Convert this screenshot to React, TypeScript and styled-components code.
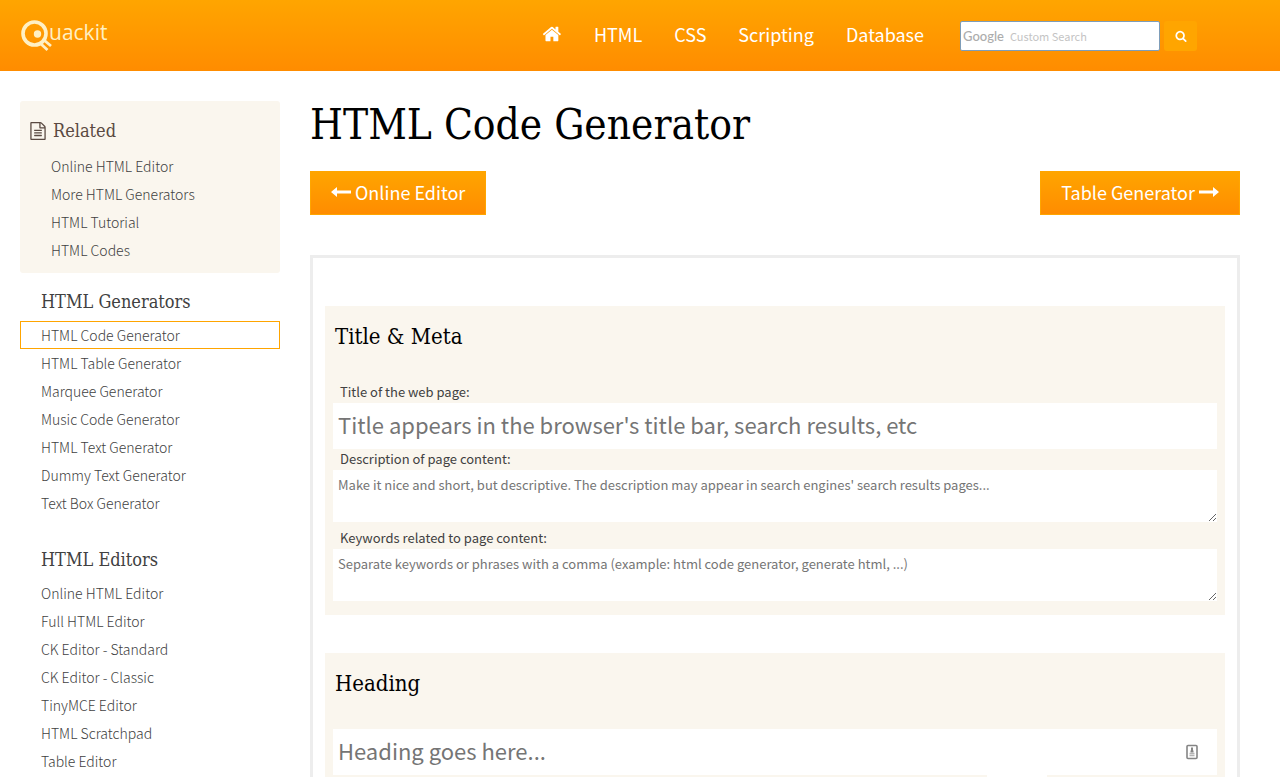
import React from "react";
import styled, { createGlobalStyle } from "styled-components";

const sans = `"Noto Sans CJK SC", "Open Sans", sans-serif`;
const slab = `"DejaVu Serif Condensed", "DejaVu Serif", serif`;

const GlobalStyle = createGlobalStyle`
  *, *::before, *::after { box-sizing: border-box; }
  body { margin: 0; background: #fff; color: #414141; font-family: ${sans}; font-size: 14px; }
  ul { list-style: none; margin: 0; padding: 0; }
  h1, h2, h3 { margin: 0; font-family: ${slab}; font-weight: 400; }
  a { color: inherit; text-decoration: none; }
  input, textarea, button, select { font-family: inherit; }
`;

const Header = styled.header`
  display: flex;
  align-items: center;
  height: 71px;
  padding: 0 83px 0 20px;
  background: linear-gradient(#ffa500, #ff8c00);
`;

const Logo = styled.a`
  display: flex;
  margin-right: auto;
  color: #fff0c4;
`;

const LogoMark = styled.svg`
  width: 33px;
  height: 32px;
`;

const LogoName = styled.span`
  margin-left: -4px;
  font-family: "Open Sans", sans-serif;
  font-size: 21px;
  line-height: 25px;
`;

const MainNav = styled.nav`
  display: flex;
  align-items: center;
  gap: 32px;
  margin-right: 36px;
  padding-bottom: 4px;
  color: #fff;
  font-size: 18px;
  line-height: 28px;
`;

const NavLink = styled.a`
  display: flex;
`;

const Icon = styled.svg<{ $size: number }>`
  width: ${(p) => p.$size}px;
  height: ${(p) => p.$size}px;
  fill: currentColor;
`;

const SearchForm = styled.form`
  display: flex;
  align-items: center;
  gap: 4px;
`;

const SearchBox = styled.label`
  display: flex;
  align-items: center;
  gap: 6px;
  width: 200px;
  height: 30px;
  padding: 0 2px;
  border: 1px solid #7e9db9;
  border-radius: 2px;
  background: #fff;
`;

const SearchBrand = styled.span`
  color: #acacac;
  font-family: Lato, sans-serif;
  font-size: 13px;
  font-weight: 500;
`;

const SearchInput = styled.input`
  flex: 1;
  min-width: 0;
  padding: 0;
  border: 0;
  outline: 0;
  background: none;
  font-size: 11px;
  &::placeholder { color: #c4c4c4; }
`;

const SearchButton = styled.button`
  display: flex;
  align-items: center;
  justify-content: center;
  width: 33px;
  height: 30px;
  padding: 0;
  border: 0;
  border-radius: 3px;
  background: #ffa500;
  color: #fff;
`;

const Page = styled.div`
  display: flex;
  gap: 30px;
  padding: 30px 40px 0 20px;
`;

const Sidebar = styled.aside`
  flex: 0 0 260px;
`;

const Related = styled.section`
  padding: 17px 0 9px;
  border-radius: 3px;
  background: #faf6ee;
`;

const RelatedHeading = styled.h3`
  display: flex;
  align-items: center;
  gap: 6px;
  margin-bottom: 8px;
  padding-left: 9px;
  font-size: 18px;
  line-height: 26px;
  color: #5a4a42;
`;

const RelatedLinks = styled.div`
  padding-left: 10px;
`;

const SideSection = styled.section`
  margin-top: 16px;
  & + & { margin-top: 30px; }
`;

const SideHeading = styled.h3`
  margin-bottom: 6px;
  padding-left: 21px;
  font-size: 18px;
  line-height: 26px;
`;

const SideLink = styled.a<{ $active?: boolean }>`
  display: block;
  padding-left: 20px;
  border: 1px solid ${(p) => (p.$active ? "#ffa500" : "transparent")};
  font-size: 14px;
  font-weight: 300;
  line-height: 26px;
`;

const Main = styled.main`
  flex: 1;
  min-width: 0;
`;

const Title = styled.h1`
  margin-bottom: 23px;
  color: #000;
  font-size: 42px;
  line-height: 47px;
`;

const Pager = styled.nav`
  display: flex;
  justify-content: space-between;
  margin-bottom: 40px;
`;

const PagerLink = styled.a`
  display: flex;
  align-items: center;
  gap: 4px;
  height: 44px;
  padding: 0 20px 2px;
  border: 1px solid #ffa500;
  background: linear-gradient(#ffa500, #ff8c00);
  color: #fff;
  font-size: 18px;
`;

const Arrow = styled.svg`
  width: 20px;
  height: 12px;
  fill: currentColor;
`;

const Generator = styled.form`
  display: flex;
  flex-direction: column;
  gap: 38px;
  padding: 48px 12px 40px;
  border: 3px solid #ededed;
`;

const Card = styled.section`
  padding: 17px 8px 14px;
  background: #faf6ee;
`;

const CardTitle = styled.h2`
  margin-bottom: 31px;
  padding-left: 2px;
  color: #000;
  font-size: 22px;
  line-height: 28px;
`;

const FieldLabel = styled.label`
  display: block;
  padding: 0 7px 2px;
  font-size: 13px;
  line-height: 19px;
`;

const BigField = styled.div`
  display: flex;
  align-items: center;
  height: 46px;
  padding-right: 19px;
  background: #fff;
  color: #777;
`;

const BigInput = styled.input`
  flex: 1;
  min-width: 0;
  height: 46px;
  padding: 0 5px 4px;
  border: 0;
  outline: 0;
  background: none;
  font-size: 22px;
  &::placeholder { color: #757575; }
`;

const TextArea = styled.textarea`
  display: block;
  width: 100%;
  height: 52px;
  padding: 5px;
  border: 0;
  outline: 0;
  background: #fff;
  font-size: 13px;
  line-height: 20px;
  resize: vertical;
  &::placeholder { color: #757575; }
  & + label { padding-top: 6px; }
`;

const LevelSelect = styled.select`
  display: block;
  width: 60px;
  height: 28px;
  margin: 0 170px 0 auto;
  border: 0;
  background: #fff;
  font-size: 13px;
`;

const HOME =
  "M1408 992v480q0 26-19 45t-45 19h-384v-384h-256v384h-384q-26 0-45-19t-19-45v-480q0-1 .5-3t.5-3l575-474 575 474q1 2 1 6zm223-69l-62 74q-8 9-21 11h-3q-13 0-21-7l-692-577-692 577q-12 8-24 7-13-2-21-11l-62-74q-8-10-7-23.5t11-21.5l719-599q32-26 76-26t76 26l244 204v-195q0-14 9-23t23-9h192q14 0 23 9t9 23v408l219 182q10 8 11 21.5t-7 23.5z";
const SEARCH =
  "M1216 832q0-185-131.5-316.5t-316.5-131.5-316.5 131.5-131.5 316.5 131.5 316.5 316.5 131.5 316.5-131.5 131.5-316.5zm512 832q0 52-38 90t-90 38q-54 0-90-38l-343-342q-179 124-399 124-143 0-273.5-55.5t-225-150-150-225-55.5-273.5 55.5-273.5 150-225 225-150 273.5-55.5 273.5 55.5 225 150 150 225 55.5 273.5q0 220-124 399l343 343q37 37 37 90z";
const FILE =
  "M1596 380q28 28 48 76t20 88v1152q0 40-28 68t-68 28h-1344q-40 0-68-28t-28-68v-1600q0-40 28-68t68-28h896q40 0 88 20t76 48zm-444-244v376h376q-10-29-22-41l-313-313q-12-12-41-22zm384 1528v-1024h-416q-40 0-68-28t-28-68v-416h-768v1536h1280zm-1024-864q0-14 9-23t23-9h704q14 0 23 9t9 23v64q0 14-9 23t-23 9h-704q-14 0-23-9t-9-23v-64zm736 224q14 0 23 9t9 23v64q0 14-9 23t-23 9h-704q-14 0-23-9t-9-23v-64q0-14 9-23t23-9h704zm0 256q14 0 23 9t9 23v64q0 14-9 23t-23 9h-704q-14 0-23-9t-9-23v-64q0-14 9-23t23-9h704z";

const topics = ["HTML", "CSS", "Scripting", "Database"];
const related = ["Online HTML Editor", "More HTML Generators", "HTML Tutorial", "HTML Codes"];
const sections = [
  {
    title: "HTML Generators",
    links: [
      "HTML Code Generator",
      "HTML Table Generator",
      "Marquee Generator",
      "Music Code Generator",
      "HTML Text Generator",
      "Dummy Text Generator",
      "Text Box Generator",
    ],
  },
  {
    title: "HTML Editors",
    links: [
      "Online HTML Editor",
      "Full HTML Editor",
      "CK Editor - Standard",
      "CK Editor - Classic",
      "TinyMCE Editor",
      "HTML Scratchpad",
      "Table Editor",
    ],
  },
];

function SideLinks({ links, active }: { links: string[]; active?: string }) {
  return (
    <ul>
      {links.map((link) => (
        <li key={link}>
          <SideLink href="#" $active={link === active}>{link}</SideLink>
        </li>
      ))}
    </ul>
  );
}

export default function App() {
  return (
    <>
      <GlobalStyle />
      <Header>
        <Logo href="#" aria-label="Quackit">
          <LogoMark viewBox="0 0 33 32" fill="none" stroke="currentColor" aria-hidden="true">
            <circle cx="14.500" cy="13.500" r="11.500" strokeWidth="3.600" />
            <circle cx="17.500" cy="14" r="3.700" fill="currentColor" stroke="none" />
            <path d="M21 24l6.500 6M24.500 20.500l6.500 5.500" strokeWidth="2.800" />
          </LogoMark>
          <LogoName>uackit</LogoName>
        </Logo>
        <MainNav aria-label="Main">
          <NavLink href="#" aria-label="Home">
            <Icon $size={20} viewBox="0 0 1680 1792" aria-hidden="true"><path d={HOME} /></Icon>
          </NavLink>
          {topics.map((t) => <NavLink key={t} href="#">{t}</NavLink>)}
        </MainNav>
        <SearchForm>
          <SearchBox>
            <SearchBrand>Google</SearchBrand>
            <SearchInput type="text" placeholder="Custom Search" />
          </SearchBox>
          <SearchButton type="button" aria-label="Search">
            <Icon $size={12} viewBox="0 0 1792 1792" aria-hidden="true"><path d={SEARCH} /></Icon>
          </SearchButton>
        </SearchForm>
      </Header>
      <Page>
        <Sidebar>
          <Related>
            <RelatedHeading>
              <Icon $size={18} viewBox="0 0 1792 1792" aria-hidden="true"><path d={FILE} /></Icon>
              Related
            </RelatedHeading>
            <RelatedLinks>
              <SideLinks links={related} />
            </RelatedLinks>
          </Related>
          {sections.map((s) => (
            <SideSection key={s.title}>
              <SideHeading>{s.title}</SideHeading>
              <SideLinks links={s.links} active="HTML Code Generator" />
            </SideSection>
          ))}
        </Sidebar>
        <Main>
          <Title>HTML Code Generator</Title>
          <Pager aria-label="Related tools">
            <PagerLink href="#">
              <Arrow viewBox="0 0 20 12" aria-hidden="true"><path d="M0 6l6-5v3.500h14v3h-14v3.500z" /></Arrow>
              Online Editor
            </PagerLink>
            <PagerLink href="#">
              Table Generator
              <Arrow viewBox="0 0 20 12" aria-hidden="true"><path d="M20 6l-6-5v3.500h-14v3h14v3.500z" /></Arrow>
            </PagerLink>
          </Pager>
          <Generator>
            <Card>
              <CardTitle>Title &amp; Meta</CardTitle>
              <FieldLabel htmlFor="page-title">Title of the web page:</FieldLabel>
              <BigField>
                <BigInput id="page-title" type="text" placeholder="Title appears in the browser's title bar, search results, etc" />
              </BigField>
              <FieldLabel htmlFor="description">Description of page content:</FieldLabel>
              <TextArea id="description" placeholder="Make it nice and short, but descriptive. The description may appear in search engines' search results pages..." />
              <FieldLabel htmlFor="keywords">Keywords related to page content:</FieldLabel>
              <TextArea id="keywords" placeholder="Separate keywords or phrases with a comma (example: html code generator, generate html, ...)" />
            </Card>
            <Card>
              <CardTitle>Heading</CardTitle>
              <BigField>
                <BigInput type="text" aria-label="Heading" placeholder="Heading goes here..." />
                <svg width="12" height="16" viewBox="0 0 12 16" fill="none" stroke="#858585" aria-hidden="true">
                  <rect x="1" y="1.500" width="10" height="13" rx="1" strokeWidth="1.600" />
                  <path d="M6 3.500v4M4.500 7.500h3" strokeWidth="2" />
                  <path d="M3.500 9.500h5M3.500 11.500h5" stroke="#b5b5b5" strokeWidth="1.500" />
                </svg>
              </BigField>
              <LevelSelect aria-label="Heading level">
                <option>H1</option>
                <option>H2</option>
                <option>H3</option>
              </LevelSelect>
            </Card>
          </Generator>
        </Main>
      </Page>
    </>
  );
}
